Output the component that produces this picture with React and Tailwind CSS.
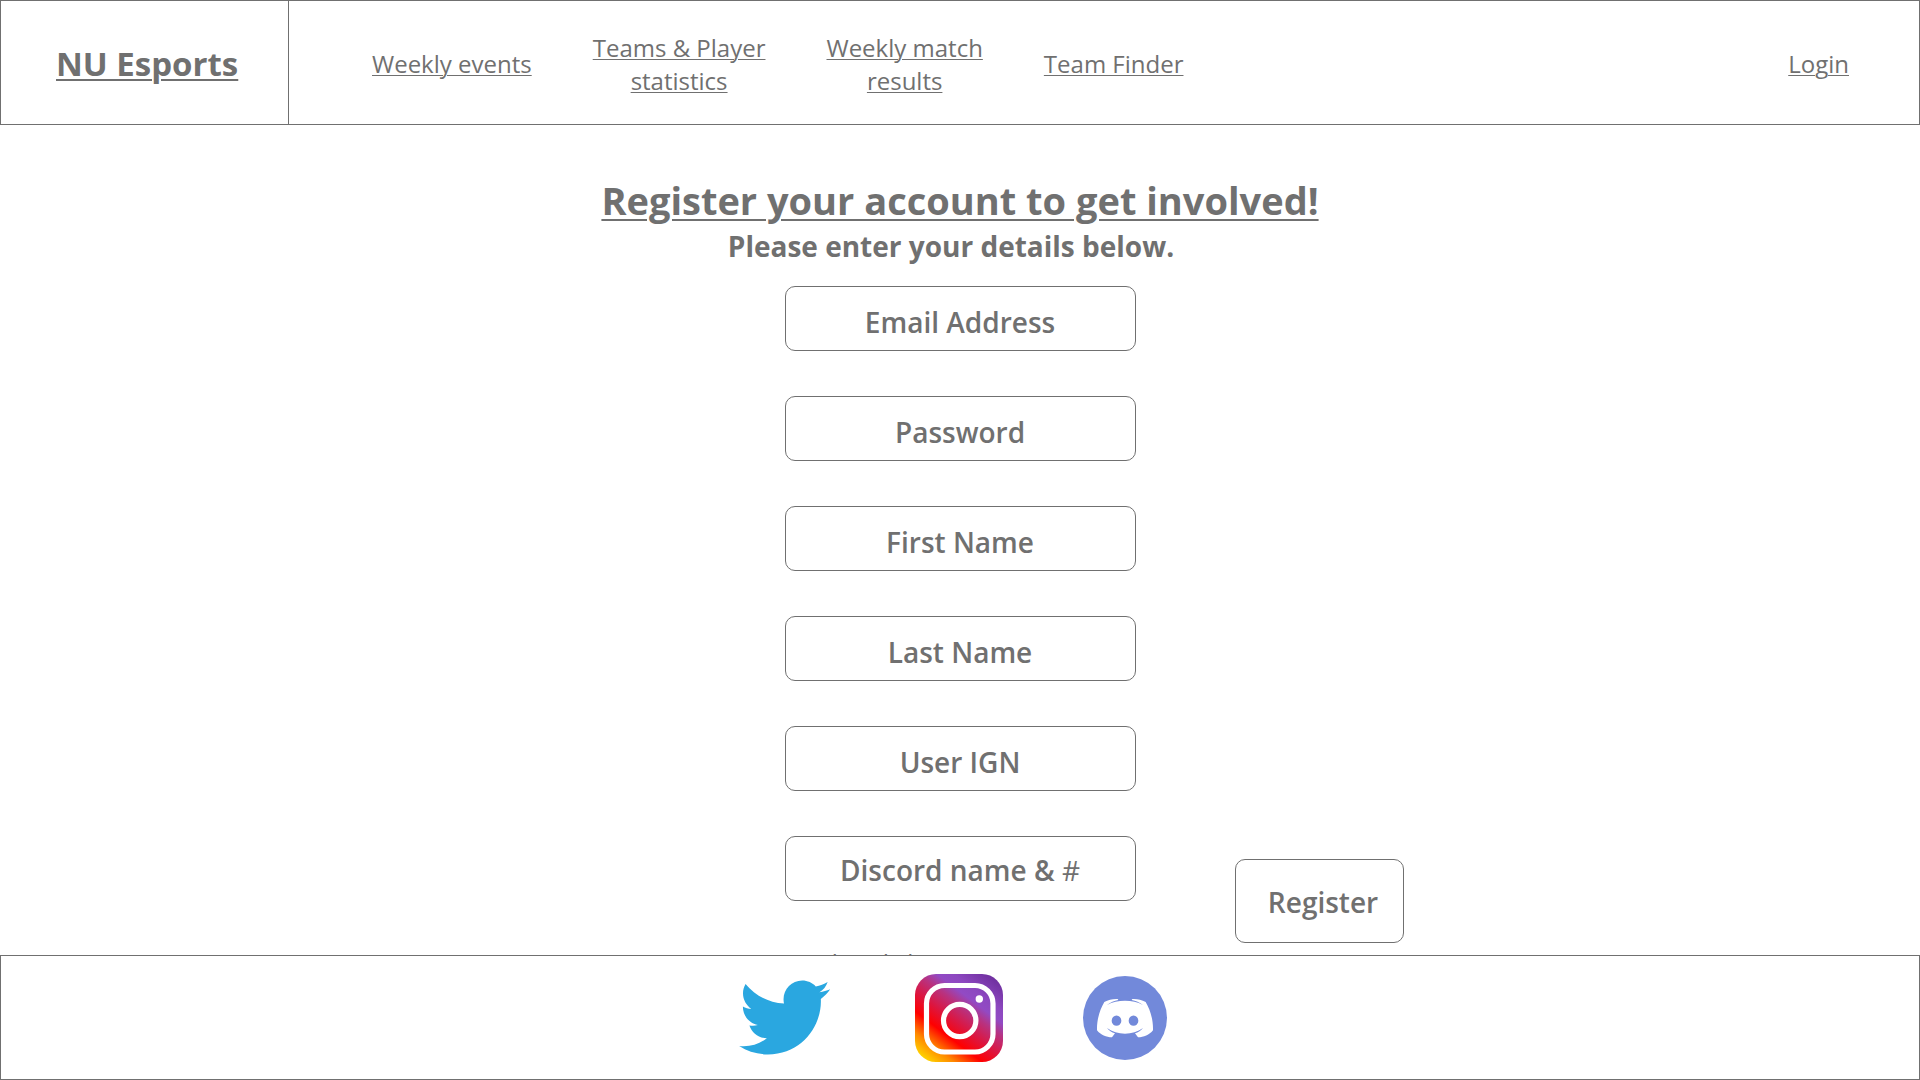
import React from "react";

const NAV_LINKS = [
  ["Weekly events"],
  ["Teams & Player", "statistics"],
  ["Weekly match", "results"],
  ["Team Finder"],
];

const FIELDS = [
  { id: "email", type: "email", label: "Email Address" },
  { id: "password", type: "password", label: "Password" },
  { id: "first-name", type: "text", label: "First Name" },
  { id: "last-name", type: "text", label: "Last Name" },
  { id: "ign", type: "text", label: "User IGN" },
  {
    id: "discord",
    type: "text",
    label: (
      <>
        Discord name & <span className="font-normal">#</span>
      </>
    ),
    raised: true,
  },
];

function NavLink({ lines }) {
  return (
    <a
      href="#"
      className="text-center text-2xl leading-[33px] underline decoration-1 underline-offset-2"
    >
      {lines.map((line, i) => (
        <React.Fragment key={line}>
          {i > 0 && <br />}
          {line}
        </React.Fragment>
      ))}
    </a>
  );
}

function Field({ id, type, label, raised }) {
  return (
    <div className="grid">
      <input
        id={id}
        type={type}
        placeholder=" "
        className="peer col-start-1 row-start-1 h-[65px] w-full rounded-[10px] border border-[#707070] bg-white px-4 text-center text-[28px] font-semibold outline-none focus:border-2"
      />
      <label
        htmlFor={id}
        className={
          "invisible col-start-1 row-start-1 cursor-text self-center text-center text-[28px] leading-[38px] font-semibold peer-placeholder-shown:visible " +
          (raised ? "pt-0.5" : "pt-[7px]")
        }
      >
        {label}
      </label>
    </div>
  );
}

function TwitterIcon() {
  return (
    <svg viewBox="0 0 538 512" className="h-[91px] w-24" aria-hidden="true">
      <path
        fill="#2aa7e0"
        d="M459.37 151.716c.325 4.548.325 9.097.325 13.645 0 138.72-105.583 298.558-298.558 298.558-59.452 0-114.68-17.219-161.137-47.106 8.447.974 16.568 1.299 25.34 1.299 49.055 0 94.213-16.568 130.274-44.832-46.132-.975-84.792-31.188-98.112-72.772 6.498.974 12.995 1.624 19.818 1.624 9.421 0 18.843-1.3 27.614-3.573-48.081-9.747-84.143-51.98-84.143-102.985v-1.299c13.969 7.797 30.214 12.67 47.431 13.319-28.264-18.843-46.781-51.005-46.781-87.391 0-19.492 5.197-37.36 14.294-52.954 51.655 63.675 129.3 105.258 216.365 109.807-1.624-7.797-2.599-15.918-2.599-24.04 0-57.828 46.782-104.934 104.934-104.934 30.213 0 57.502 12.67 76.67 33.137 23.715-4.548 46.456-13.32 66.599-25.34-7.798 24.366-24.366 44.833-46.132 57.827 21.117-2.273 41.584-8.122 60.426-16.243-14.292 20.791-32.161 39.308-52.628 54.253z"
      />
    </svg>
  );
}

function InstagramIcon() {
  return (
    <svg viewBox="0 0 88 88" className="size-[88px]" aria-hidden="true">
      <defs>
        <linearGradient id="ig" gradientUnits="userSpaceOnUse" x1="0" y1="88" x2="74" y2="-10">
          <stop offset="0.06" stopColor="#ffd800" />
          <stop offset="0.19" stopColor="#ff8a00" />
          <stop offset="0.33" stopColor="#ff0000" />
          <stop offset="0.46" stopColor="#dc1640" />
          <stop offset="0.59" stopColor="#b83280" />
          <stop offset="0.68" stopColor="#924ac4" />
          <stop offset="0.76" stopColor="#8d48c0" />
          <stop offset="0.93" stopColor="#7030a0" />
        </linearGradient>
      </defs>
      <rect width="88" height="88" rx="21" fill="url(#ig)" />
      <rect x="11.5" y="11.5" width="66.5" height="66.5" rx="18" fill="none" stroke="#fff" strokeWidth="5.2" />
      <circle cx="44.7" cy="46.5" r="16.2" fill="none" stroke="#fff" strokeWidth="5.2" />
      <circle cx="64.3" cy="25" r="3.7" fill="#fff" />
    </svg>
  );
}

function DiscordIcon() {
  return (
    <svg viewBox="0 0 252 252" className="size-[84px]" aria-hidden="true">
      <circle cx="126" cy="126" r="126" fill="#7289da" />
      <path
        fill="#fff"
        d="M104 69C90 68 76 72 64 78C50 102 41 132 42 163C53 177 70 184 87 184L96 172C86 169 78 163 72 156C88 168 106 173 126 173C146 173 164 168 180 156C174 163 166 169 156 172L165 184C182 184 199 177 210 163C211 132 202 102 188 78C176 72 162 68 148 69L146 72C158 75 170 79 180 87C164 77 146 74 126 74C106 74 88 77 72 87C82 79 94 75 106 72Z"
      />
      <ellipse cx="100.5" cy="134" rx="14.5" ry="15.5" fill="#7289da" />
      <ellipse cx="151.5" cy="134" rx="14.5" ry="15.5" fill="#7289da" />
    </svg>
  );
}

export default function App() {
  return (
    <div className="flex h-screen flex-col bg-white font-['Open_Sans',sans-serif] text-[#707070]">
      <header className="flex h-[125px] shrink-0 border border-[#707070]">
        <div className="flex w-72 items-center border-r border-[#707070] pl-[55px]">
          <a
            href="#"
            className="pt-0.5 text-[33px] leading-[44px] font-bold underline decoration-2 underline-offset-3"
          >
            NU Esports
          </a>
        </div>
        <nav className="flex flex-1 items-center gap-[61px] pt-0.5 pr-[70px] pl-[83px]">
          {NAV_LINKS.map((lines) => (
            <NavLink key={lines[0]} lines={lines} />
          ))}
          <div className="ml-auto flex">
            <NavLink lines={["Login"]} />
          </div>
        </nav>
      </header>

      <main className="min-h-0 flex-1 overflow-hidden pt-[49px]">
        <h1 className="text-center text-[38px] leading-[52px] font-bold underline decoration-2 underline-offset-4">
          Register your account to get involved!
        </h1>
        <h2 className="pr-[18px] text-center text-[28px] leading-10 font-bold">
          Please enter your details below.
        </h2>
        <form className="mt-5 grid grid-cols-[1fr_351px_1fr]" onSubmit={(e) => e.preventDefault()}>
          <div className="col-start-2 flex flex-col gap-[45px]">
            {FIELDS.map((field) => (
              <Field key={field.id} {...field} />
            ))}
            <p className="pl-8 text-2xl leading-[33px] whitespace-nowrap">
              Already have an account?
            </p>
          </div>
          <button
            type="submit"
            className="mb-9 ml-[99px] h-[84px] w-[169px] self-end rounded-[10px] border border-[#707070] pt-0.5 pl-2 text-[28px] leading-[38px] font-semibold"
          >
            Register
          </button>
        </form>
      </main>

      <footer className="flex h-[125px] shrink-0 items-center justify-center gap-20 border border-[#707070] bg-white pr-3.5">
        <a href="#" aria-label="Twitter">
          <TwitterIcon />
        </a>
        <a href="#" aria-label="Instagram">
          <InstagramIcon />
        </a>
        <a href="#" aria-label="Discord">
          <DiscordIcon />
        </a>
      </footer>
    </div>
  );
}
